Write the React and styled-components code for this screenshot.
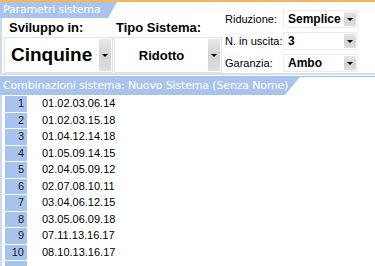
import styled, { createGlobalStyle } from "styled-components";

const GlobalStyle = createGlobalStyle`
    html, body {
        margin: 0;
        padding: 0;
        background: #fff;
    }
    body {
        font-family: "Liberation Sans", Arial, sans-serif;
        color: #000;
    }
`;

const Page = styled.div`
    width: 375px;
    height: 266px;
    overflow: hidden;
    border-top: 2px solid #f3b560;
    box-sizing: border-box;
    background: #fff;
`;

const Top = styled.div`
    display: flex;
    height: 73px;
    border-bottom: 2px solid #d2e0f4;
    box-sizing: border-box;
`;

const LeftSide = styled.div`
    width: 222px;
    display: flex;
    flex-direction: column;
`;

const Tab = styled.div`
    width: ${(p) => p.$width}px;
    height: ${(p) => p.$height}px;
    padding-left: 3px;
    box-sizing: border-box;
    background: #a8c4ec;
    color: #fff;
    font-family: "DejaVu Sans", Verdana, sans-serif;
    font-size: 11px;
    letter-spacing: -0.15px;
    line-height: ${(p) => p.$height}px;
    white-space: nowrap;
    clip-path: polygon(0 0, 100% 0, calc(100% - ${(p) => p.$slant}px) 100%, 0 100%);
`;

const Groups = styled.div`
    flex: 1;
    display: flex;
    border-left: 2px solid #cbdaf1;
`;

const Group = styled.div`
    width: ${(p) => p.$width}px;
    display: flex;
    flex-direction: column;
`;

const GroupLabel = styled.div`
    height: 19px;
    line-height: 19px;
    padding-left: ${(p) => p.$indent}px;
    font-size: 13px;
    font-weight: bold;
    white-space: nowrap;
`;

const BigSelect = styled.div`
    margin-left: ${(p) => p.$offset}px;
    height: 36px;
    display: flex;
    align-items: stretch;
    border: 1px solid #e3e3e3;
    box-sizing: border-box;
    background: #fff;
`;

const BigValue = styled.div`
    flex: 1;
    display: flex;
    align-items: center;
    justify-content: ${(p) => (p.$center ? "center" : "flex-start")};
    padding-left: ${(p) => (p.$center ? 0 : 6)}px;
    font-weight: bold;
    font-size: ${(p) => p.$size}px;
    white-space: nowrap;
`;

const DropButton = styled.div`
    width: 12px;
    margin: 1px 1px 1px 0;
    display: flex;
    align-items: center;
    justify-content: center;
    background: linear-gradient(to bottom, #e8e8e8, #d2d2d2 50%, #dedede);
    &::after {
        content: "";
        border-left: 3px solid transparent;
        border-right: 3px solid transparent;
        border-top: 3px solid #000;
    }
`;

const RightSide = styled.div`
    flex: 1;
    display: flex;
    flex-direction: column;
    gap: 4px;
    padding-top: 8px;
    padding-left: 3px;
`;

const OptionRow = styled.div`
    display: flex;
    align-items: center;
    height: 18px;
`;

const OptionLabel = styled.div`
    width: 58px;
    font-size: 11px;
    white-space: nowrap;
`;

const SmallSelect = styled.div`
    width: 75px;
    height: 18px;
    display: flex;
    border: 1px solid #ececec;
    box-sizing: border-box;
`;

const SmallValue = styled.div`
    flex: 1;
    padding-left: 4px;
    font-size: 12px;
    font-weight: bold;
    line-height: 16px;
`;

const SectionBar = styled.div`
    margin-top: 1px;
    border-top: 1px solid #a6c0ea;
`;

const List = styled.div`
    padding-top: 1px;
    border-left: 2px solid #cbdaf1;
`;

const Row = styled.div`
    display: flex;
    height: 16.5px;
`;

const RowNumber = styled.div`
    width: 22px;
    margin-left: 3px;
    margin-bottom: 1px;
    padding-right: 3px;
    box-sizing: border-box;
    background: #a9c4ec;
    text-align: right;
    font-size: 11px;
    line-height: 15.5px;
    color: #1a1a2a;
`;

const Combination = styled.div`
    padding-left: 15px;
    font-size: 11px;
    line-height: 15.5px;
`;

const options = [
    { label: "Riduzione:", value: "Semplice" },
    { label: "N. in uscita:", value: "3" },
    { label: "Garanzia:", value: "Ambo" },
];

const combinations = [
    "01.02.03.06.14",
    "01.02.03.15.18",
    "01.04.12.14.18",
    "01.05.09.14.15",
    "02.04.05.09.12",
    "02.07.08.10.11",
    "03.04.06.12.15",
    "03.05.06.09.18",
    "07.11.13.16.17",
    "08.10.13.16.17",
    "",
];

export default function App() {
    return (
        <>
            <GlobalStyle />
            <Page>
                <Top>
                    <LeftSide>
                        <Tab $width={117} $height={16} $slant={9}>
                            Parametri sistema
                        </Tab>
                        <Groups>
                            <Group $width={111}>
                                <GroupLabel $indent={7}>Sviluppo in:</GroupLabel>
                                <BigSelect $offset={2}>
                                    <BigValue $size={19}>Cinquine</BigValue>
                                    <DropButton />
                                </BigSelect>
                            </Group>
                            <Group $width={109}>
                                <GroupLabel $indent={3}>Tipo Sistema:</GroupLabel>
                                <BigSelect $offset={1}>
                                    <BigValue $size={13} $center>
                                        Ridotto
                                    </BigValue>
                                    <DropButton />
                                </BigSelect>
                            </Group>
                        </Groups>
                    </LeftSide>
                    <RightSide>
                        {options.map((o) => (
                            <OptionRow key={o.label}>
                                <OptionLabel>{o.label}</OptionLabel>
                                <SmallSelect>
                                    <SmallValue>{o.value}</SmallValue>
                                    <DropButton />
                                </SmallSelect>
                            </OptionRow>
                        ))}
                    </RightSide>
                </Top>
                <SectionBar>
                    <Tab $width={300} $height={18} $slant={15}>
                        Combinazioni sistema: Nuovo Sistema (Senza Nome)
                    </Tab>
                </SectionBar>
                <List>
                    {combinations.map((c, i) => (
                        <Row key={i}>
                            <RowNumber>{c ? i + 1 : ""}</RowNumber>
                            <Combination>{c}</Combination>
                        </Row>
                    ))}
                </List>
            </Page>
        </>
    );
}
